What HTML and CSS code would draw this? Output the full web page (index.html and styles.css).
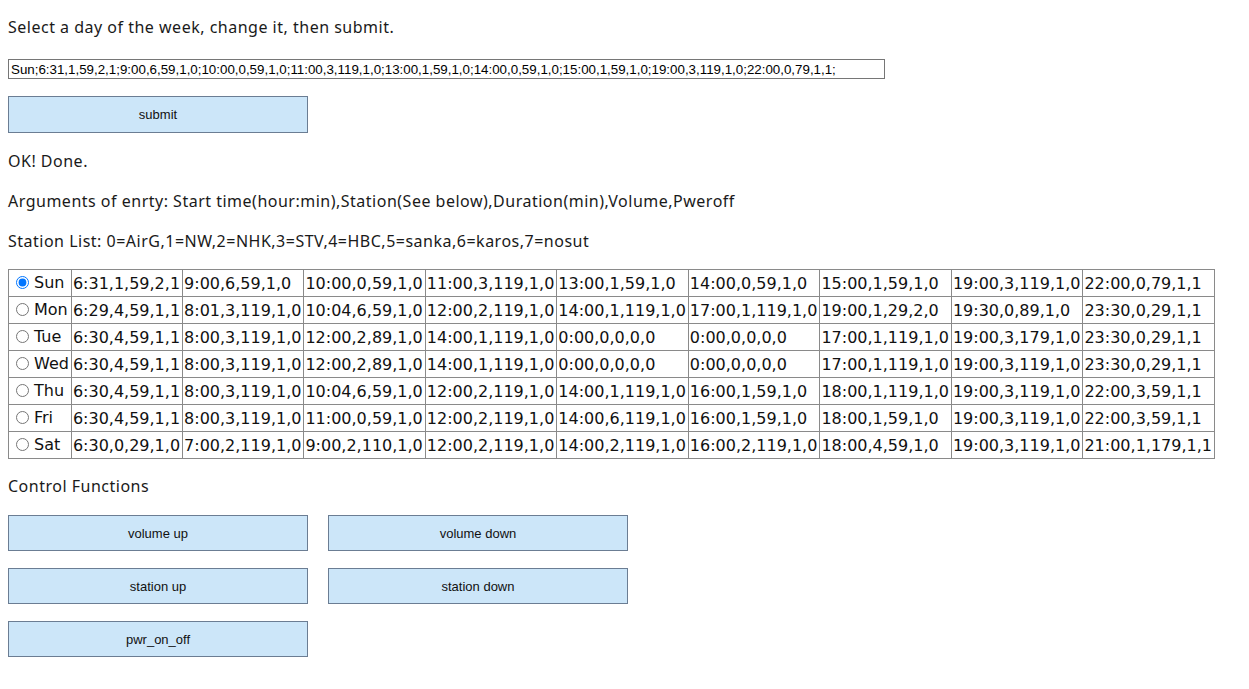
FILE: index.html
```html
<!DOCTYPE html>
<html>
<head>
<meta charset="utf-8">
<link rel="stylesheet" href="styles.css">
</head>
<body>
<p class="txt first">Select a day of the week, change it, then submit.</p>
<form class="entry">
<input class="entry-input" type="text" value="Sun;6:31,1,59,2,1;9:00,6,59,1,0;10:00,0,59,1,0;11:00,3,119,1,0;13:00,1,59,1,0;14:00,0,59,1,0;15:00,1,59,1,0;19:00,3,119,1,0;22:00,0,79,1,1;">
<button class="btn submit" type="button">submit</button>
</form>
<p class="txt">OK! Done.</p>
<p class="txt">Arguments of enrty: Start time(hour:min),Station(See below),Duration(min),Volume,Pweroff</p>
<p class="txt">Station List: 0=AirG,1=NW,2=NHK,3=STV,4=HBC,5=sanka,6=karos,7=nosut</p>
<table class="sched">
<tr><td><label class="day"><input type="radio" name="d" checked>Sun</label></td><td>6:31,1,59,2,1</td><td>9:00,6,59,1,0</td><td>10:00,0,59,1,0</td><td>11:00,3,119,1,0</td><td>13:00,1,59,1,0</td><td>14:00,0,59,1,0</td><td>15:00,1,59,1,0</td><td>19:00,3,119,1,0</td><td>22:00,0,79,1,1</td></tr>
<tr><td><label class="day"><input type="radio" name="d">Mon</label></td><td>6:29,4,59,1,1</td><td>8:01,3,119,1,0</td><td>10:04,6,59,1,0</td><td>12:00,2,119,1,0</td><td>14:00,1,119,1,0</td><td>17:00,1,119,1,0</td><td>19:00,1,29,2,0</td><td>19:30,0,89,1,0</td><td>23:30,0,29,1,1</td></tr>
<tr><td><label class="day"><input type="radio" name="d">Tue</label></td><td>6:30,4,59,1,1</td><td>8:00,3,119,1,0</td><td>12:00,2,89,1,0</td><td>14:00,1,119,1,0</td><td>0:00,0,0,0,0</td><td>0:00,0,0,0,0</td><td>17:00,1,119,1,0</td><td>19:00,3,179,1,0</td><td>23:30,0,29,1,1</td></tr>
<tr><td><label class="day"><input type="radio" name="d">Wed</label></td><td>6:30,4,59,1,1</td><td>8:00,3,119,1,0</td><td>12:00,2,89,1,0</td><td>14:00,1,119,1,0</td><td>0:00,0,0,0,0</td><td>0:00,0,0,0,0</td><td>17:00,1,119,1,0</td><td>19:00,3,119,1,0</td><td>23:30,0,29,1,1</td></tr>
<tr><td><label class="day"><input type="radio" name="d">Thu</label></td><td>6:30,4,59,1,1</td><td>8:00,3,119,1,0</td><td>10:04,6,59,1,0</td><td>12:00,2,119,1,0</td><td>14:00,1,119,1,0</td><td>16:00,1,59,1,0</td><td>18:00,1,119,1,0</td><td>19:00,3,119,1,0</td><td>22:00,3,59,1,1</td></tr>
<tr><td><label class="day"><input type="radio" name="d">Fri</label></td><td>6:30,4,59,1,1</td><td>8:00,3,119,1,0</td><td>11:00,0,59,1,0</td><td>12:00,2,119,1,0</td><td>14:00,6,119,1,0</td><td>16:00,1,59,1,0</td><td>18:00,1,59,1,0</td><td>19:00,3,119,1,0</td><td>22:00,3,59,1,1</td></tr>
<tr><td><label class="day"><input type="radio" name="d">Sat</label></td><td>6:30,0,29,1,0</td><td>7:00,2,119,1,0</td><td>9:00,2,110,1,0</td><td>12:00,2,119,1,0</td><td>14:00,2,119,1,0</td><td>16:00,2,119,1,0</td><td>18:00,4,59,1,0</td><td>19:00,3,119,1,0</td><td>21:00,1,179,1,1</td></tr>
</table>
<p class="txt ctl-title">Control Functions</p>
<div class="ctl-grid">
<button class="btn" type="button">volume up</button>
<button class="btn" type="button">volume down</button>
<button class="btn" type="button">station up</button>
<button class="btn" type="button">station down</button>
<button class="btn" type="button">pwr_on_off</button>
</div>
</body>
</html>
```
FILE: styles.css
```css
html, body {
  background: #ffffff;
}
body {
  margin: 0;
  padding: 8px;
  font-family: "Noto Sans", "Open Sans", sans-serif;
  font-size: 16px;
  color: #000;
}
.txt {
  margin: 16px 0;
  line-height: 24px;
  font-size: 16px;
  letter-spacing: 0.5px;
  color: #1a1a1a;
}
.txt.first {
  margin-top: 7px;
}
.entry {
  margin: 0;
}
.entry-input {
  display: block;
  box-sizing: border-box;
  width: 877px;
  height: 20px;
  margin: 20px 0 0 0;
  padding: 0 2px;
  border: 1px solid #767676;
  font-family: "Liberation Sans", Arial, sans-serif;
  font-size: 13.33px;
  color: #000;
}
.btn {
  display: block;
  box-sizing: border-box;
  width: 300px;
  height: 36px;
  background: #cce6f9;
  border: 1px solid #6b7d93;
  border-radius: 0;
  font-family: "Liberation Sans", Arial, sans-serif;
  font-size: 13px;
  color: #111;
  padding: 0;
}
.btn.submit {
  height: 37px;
  margin-top: 17px;
}
.sched {
  border-collapse: collapse;
  font-family: "DejaVu Sans", Verdana, sans-serif;
  font-size: 16px;
  margin-top: 16px;
}
.sched td {
  border: 1px solid #8a8a8a;
  padding: 0 2px 0 1px;
  height: 26px;
  white-space: nowrap;
  color: #111;
}
.day {
  display: inline-flex;
  align-items: center;
}
.day input {
  margin: 0 5px 0 6px;
  width: 13px;
  height: 13px;
}
.ctl-title {
  margin: 15px 0 17px;
}
.ctl-grid {
  display: grid;
  grid-template-columns: 300px 300px;
  column-gap: 20px;
  row-gap: 17px;
}
```
